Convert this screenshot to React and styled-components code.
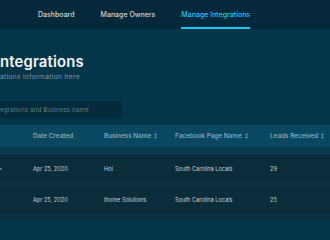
import React from 'react';
import styled, { createGlobalStyle } from 'styled-components';

const GlobalStyle = createGlobalStyle`
  html, body {
    margin: 0;
    padding: 0;
    background: #053549;
    font-family: Inter, "Noto Sans", sans-serif;
    overflow: hidden;
  }
`;

const Page = styled.div`
  width: 330px;
  height: 220px;
  overflow: hidden;
  background: #053549;
  display: flex;
  flex-direction: column;
  & > * {
    flex-shrink: 0;
  }
`;

const TopNav = styled.nav`
  height: 29px;
  background: #05293a;
  display: flex;
  align-items: stretch;
  padding-left: 38px;
  gap: 26px;
`;

const NavLink = styled.a`
  display: flex;
  align-items: center;
  font-size: 7px;
  font-weight: 500;
  color: ${p => (p.$active ? '#1ec8f2' : '#c8d5dc')};
  border-bottom: 2px solid ${p => (p.$active ? '#1ec8f2' : 'transparent')};
  padding-top: 1px;
  white-space: nowrap;
`;

const Heading = styled.div`
  padding: 24px 0 0 0;
  display: flex;
  flex-direction: column;
  gap: 2px;
`;

const Title = styled.h1`
  margin: 0;
  font-size: 14.8px;
  line-height: 18px;
  font-weight: 600;
  color: #f2f6f8;
  letter-spacing: 0.2px;
`;

const Subtitle = styled.p`
  margin: 0;
  font-size: 6.6px;
  line-height: 9px;
  color: #7d9cab;
  letter-spacing: 0.35px;
`;

const SearchBox = styled.div`
  margin-top: 19px;
  width: 122px;
  height: 17px;
  background: #042b3c;
  display: flex;
  align-items: center;
  font-size: 6.2px;
  letter-spacing: 0.1px;
  color: #5f8191;
  white-space: nowrap;
  overflow: hidden;
`;

const Table = styled.div`
  margin-top: 7px;
  display: flex;
  flex-direction: column;
  & > * {
    flex-shrink: 0;
  }
`;

const Row = styled.div`
  display: grid;
  grid-template-columns: 33px 71px 71px 95px 1fr;
  align-items: center;
  height: ${p => p.$h}px;
  background: ${p => p.$bg};
  border-bottom: ${p => (p.$sep ? `2px solid ${p.$sep}` : 'none')};
`;

const HeadCell = styled.div`
  display: flex;
  align-items: center;
  gap: 3px;
  font-size: 6.4px;
  font-weight: 500;
  color: #8eb0c0;
  white-space: nowrap;
`;

const Cell = styled.div`
  font-size: 5.6px;
  color: #c5d2d9;
  white-space: nowrap;
`;

const Caret = styled.div`
  margin-left: -3px;
  display: flex;
  align-items: center;
`;

const SortIcon = () => (
  <svg width="3" height="6" viewBox="0 0 3 6">
    <path d="M1.5 0.3 L2.9 2.3 L0.1 2.3 Z" fill="#8eb0c0" />
    <path d="M1.5 5.7 L2.9 3.7 L0.1 3.7 Z" fill="#8eb0c0" />
  </svg>
);

const rows = [
  { date: 'Apr 25, 2020', business: 'Hoi', page: 'South Carolina Locals', leads: '29' },
  { date: 'Apr 25, 2020', business: 'Ihome Solutions', page: 'South Carolina Locals', leads: '25' },
];

export default function App() {
  return (
    <Page>
      <GlobalStyle />
      <TopNav>
        <NavLink>Dashboard</NavLink>
        <NavLink>Manage Owners</NavLink>
        <NavLink $active>Manage Integrations</NavLink>
      </TopNav>
      <Heading>
        <Title>ntegrations</Title>
        <Subtitle>ations information here</Subtitle>
      </Heading>
      <SearchBox>egrations and Business name</SearchBox>
      <Table>
        <Row $h={22} $bg="#0a4862">
          <HeadCell />
          <HeadCell>Date Created</HeadCell>
          <HeadCell>Business Name <SortIcon /></HeadCell>
          <HeadCell>Facebook Page Name <SortIcon /></HeadCell>
          <HeadCell>Leads Received <SortIcon /></HeadCell>
        </Row>
        <Row $h={7} $bg="#0b3b51" />
        {rows.map((r, i) => (
          <Row key={i} $h={29} $bg="#0b2c3b" $sep="#0d3347">
            <Caret>
              {i === 0 && (
                <svg width="5" height="4" viewBox="0 0 5 4">
                  <path d="M0.5 1 L2.5 3 L4.5 1" stroke="#d8e2e7" strokeWidth="0.9" fill="none" />
                </svg>
              )}
            </Caret>
            <Cell>{r.date}</Cell>
            <Cell>{r.business}</Cell>
            <Cell>{r.page}</Cell>
            <Cell>{r.leads}</Cell>
          </Row>
        ))}
        <Row $h={29} $bg="#0b2c3b" />
      </Table>
    </Page>
  );
}
